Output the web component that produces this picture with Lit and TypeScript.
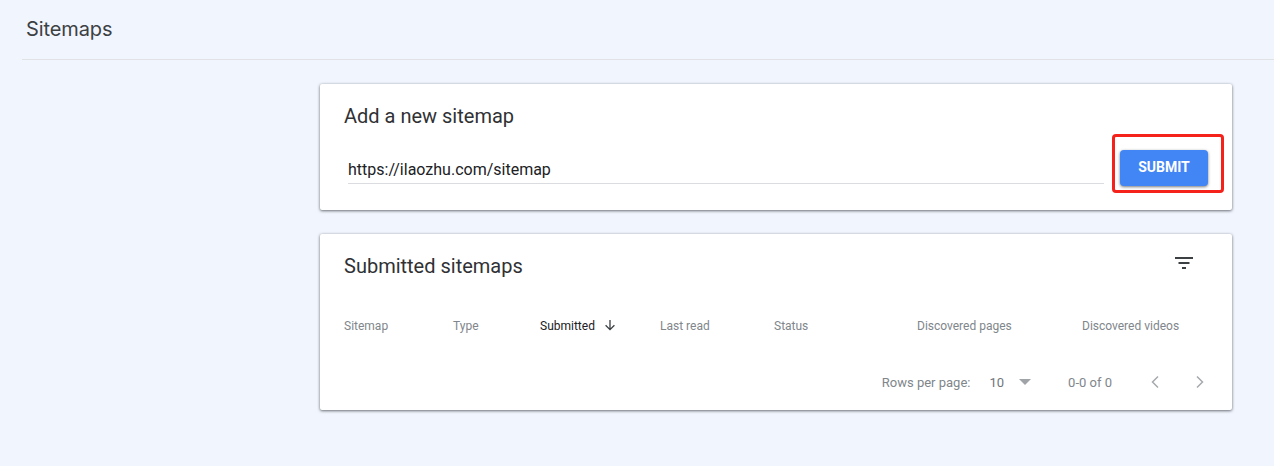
import { LitElement, html, css } from "lit";
import { customElement } from "lit/decorators.js";

@customElement("app-root")
export class AppRoot extends LitElement {
  static styles = css`
    :host { display: block; width: 1274px; height: 466px; background: #f1f5fe; font-family: Roboto, "Liberation Sans", sans-serif; overflow: hidden; }
    .head { margin-left: 22px; height: 59px; border-bottom: 1px solid #e0e2e6; display: flex; align-items: center; padding-left: 4px; }
    .head h1 { margin: 0; font: 400 20px/24px Inter, Roboto, sans-serif; color: #3c4043; letter-spacing: -0.1px; position: relative; top: -1px; }
    .main { margin: 24px 42px 0 320px; display: flex; flex-direction: column; gap: 24px; }
    .card { background: #fff; border-radius: 2px; box-shadow: 0 1px 3px rgba(60,64,67,.7), 0 0 3px rgba(60,64,67,.15); position: relative; }
    .add { height: 126px; padding: 20px 24px 0; box-sizing: border-box; }
    h2 { margin: 0; font: 400 20px/24px Roboto, sans-serif; color: #303134; }
    .row { display: flex; align-items: flex-start; margin-top: 16px; }
    .input { margin-left: 4px; width: 756px; height: 40px; box-sizing: border-box; border-bottom: 1px solid #dadce0; font-size: 16px; line-height: 20px; padding-top: 16px; color: #202124; }
    .btn { margin-left: 16px; margin-top: 6px; width: 88px; height: 36px; background: #4285f4; color: #fff; border-radius: 4px; font: 700 14px/34px Roboto, sans-serif; text-align: center; box-shadow: 0 1px 3px rgba(60,64,67,.7); }
    .mark { position: absolute; left: 792px; top: 50px; width: 112px; height: 59px; box-sizing: border-box; border: 3px solid #f4221b; border-radius: 4px; }
    .list { height: 176px; padding: 0 24px; box-sizing: border-box; }
    .top { display: flex; justify-content: space-between; padding-top: 20px; height: 70px; box-sizing: border-box; }
    .top svg { margin-right: 16px; display: block; width: 24px; height: 24px; position: relative; top: -3px; left: 4px; }
    .cols { display: grid; grid-template-columns: 109px 87px 120px 114px 143px 165px 1fr; height: 44px; font-size: 12px; line-height: 44px; color: #80868b; }
    .sorted { color: #202124; display: flex; align-items: center; gap: 9px; }
    .sorted svg { width: 12px; height: 12px; position: relative; top: -1px; }
    .foot { display: flex; align-items: center; justify-content: flex-end; height: 44px; margin-top: 12px; font-size: 13px; color: #80868b; }
    .rp { margin-right: 19px; }
    .val { color: #70757a; }
    .tri { margin: 0 37px 0 15px; width: 0; height: 0; border-left: 6px solid transparent; border-right: 6px solid transparent; border-top: 6px solid #a0a3a7; }
    .range { margin-right: 37px; }
    .nav { display: block; width: 12px; height: 14px; }
    .nav + .nav { margin: 0 2px 0 33px; }
  `;

  render() {
    return html`
      <div class="head"><h1>Sitemaps</h1></div>
      <div class="main">
        <section class="card add">
          <h2>Add a new sitemap</h2>
          <div class="row">
            <div class="input">https://ilaozhu.com/sitemap</div>
            <div class="btn">SUBMIT</div>
          </div>
          <div class="mark"></div>
        </section>
        <section class="card list">
          <div class="top">
            <h2>Submitted sitemaps</h2>
            <svg viewBox="0 0 24 24"><path fill="#3c4043" d="M3 6h18v2H3zM6.5 11h11v2h-11zM10 16h4v2h-4z"/></svg>
          </div>
          <div class="cols">
            <div>Sitemap</div>
            <div>Type</div>
            <div class="sorted">Submitted
              <svg viewBox="0 0 12 12"><path fill="none" stroke="#3c4043" stroke-width="1.3" d="M6 1v9.5M1.6 6.2 6 10.6l4.4-4.4"/></svg>
            </div>
            <div>Last read</div>
            <div>Status</div>
            <div>Discovered pages</div>
            <div>Discovered videos</div>
          </div>
          <div class="foot">
            <span class="rp">Rows per page:</span>
            <span class="val">10</span>
            <span class="tri"></span>
            <span class="range">0-0 of 0</span>
            <svg class="nav" viewBox="0 0 12 14"><path fill="none" stroke="#a6a9ad" stroke-width="1.5" d="M9 1.5 3.5 7 9 12.5"/></svg>
            <svg class="nav" viewBox="0 0 12 14"><path fill="none" stroke="#a6a9ad" stroke-width="1.5" d="M3 1.5 8.5 7 3 12.5"/></svg>
          </div>
        </section>
      </div>
    `;
  }
}
